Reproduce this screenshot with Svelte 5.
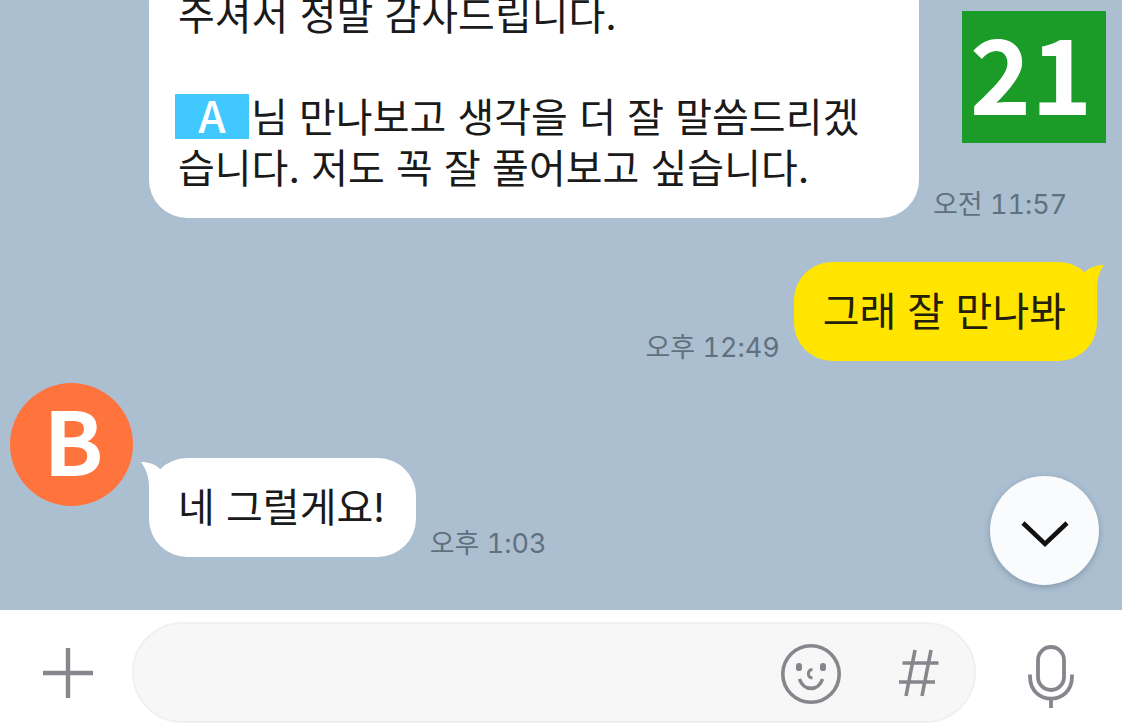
<script>
  let draft = $state('');
</script>

<main class="screen">
  <section class="chat" aria-label="대화">
    <div class="row received continued">
      <p class="bubble long">주셔서 정말 감사드립니다.<br /><br /><span class="name-tag">A</span>님 만나보고 생각을 더 잘 말씀드리겠습니다. 저도 꼭 잘 풀어보고 싶습니다.</p>
      <time datetime="11:57">오전 11:57</time>
    </div>

    <div class="row sent">
      <time datetime="12:49">오후 12:49</time>
      <p class="bubble yellow">
        그래 잘 만나봐
        <svg class="tail tail-right" viewBox="0 0 40 48" aria-hidden="true">
          <path d="M21 10C26 5 33 3 40 3C35 10 33 17 33 27V48H10Z" />
        </svg>
      </p>
    </div>

    <div class="row received first">
      <div class="avatar">B</div>
      <p class="bubble">
        네 그럴게요!
        <svg class="tail tail-left" viewBox="0 0 40 48" aria-hidden="true">
          <path d="M19 11C14 6 8 4 0 4C5 11 8 19 8 28V48H30Z" />
        </svg>
      </p>
      <time datetime="13:03">오후 1:03</time>
    </div>

    <div class="counter">21</div>

    <button class="scroll-down" type="button" aria-label="아래로">
      <svg width="48" height="28" viewBox="0 0 48 28" aria-hidden="true">
        <path d="M2 3L24 24L46 3" fill="none" stroke="#111" stroke-width="4.5" />
      </svg>
    </button>
  </section>

  <form class="composer" onsubmit={(e) => e.preventDefault()}>
    <button class="side add" type="button" aria-label="추가">
      <svg width="52" height="52" viewBox="0 0 52 52" aria-hidden="true">
        <path d="M26 1V51M1 26H51" stroke-width="4.4" />
      </svg>
    </button>
    <div class="field">
      <input type="text" aria-label="메시지" bind:value={draft} />
      <button type="button" aria-label="이모티콘">
        <svg width="60" height="60" viewBox="0 0 60 60" aria-hidden="true">
          <circle cx="30" cy="30" r="28.2" stroke-width="3.6" />
          <g fill="#85878d" stroke="none">
            <rect x="15" y="19" width="6" height="8" rx="2.8" />
            <rect x="39" y="19" width="6" height="8" rx="2.8" />
          </g>
          <path d="M31.5 25.5C26 26 26 33.5 31.5 34" stroke-width="3" />
          <path d="M18.5 35C22.500 47.500 37.500 47.500 41.5 35" stroke-width="3.6" />
        </svg>
      </button>
      <button type="button" aria-label="샵 검색">
        <svg width="60" height="60" viewBox="0 0 60 60" aria-hidden="true">
          <path d="M26 6L17 52M42 6L33 52M13.5 19H49.5M10 38H46" stroke-width="3.6" />
        </svg>
      </button>
    </div>
    <button class="side mic" type="button" aria-label="음성">
      <svg width="50" height="66" viewBox="0 0 50 66" aria-hidden="true">
        <rect x="12" y="4" width="26" height="43" rx="13" stroke-width="3.8" />
        <path d="M4 31.5V33.5C4 63 46 63 46 33.5V31.5M25 55.5V65" stroke-width="3.8" />
      </svg>
    </button>
  </form>
</main>

<style>
  :global(body) {
    margin: 0;
  }

  .screen {
    display: flex;
    flex-direction: column;
    height: 100vh;
    overflow: hidden;
    background: #fff;
    font-family: Inter, 'Noto Sans CJK KR', sans-serif;
  }

  .chat {
    position: relative;
    flex: 1;
    min-height: 0;
    display: flex;
    flex-direction: column;
    justify-content: flex-end;
    padding: 0 25px 53px 10px;
    overflow: hidden;
    background: #abbfd1;
  }

  .row {
    display: flex;
    flex-shrink: 0;
    align-items: flex-end;
    gap: 14px;
  }

  .continued {
    padding-left: 139px;
  }

  .sent {
    justify-content: flex-end;
    margin-top: 44px;
  }

  .first {
    margin-top: 22px;
  }

  .bubble {
    position: relative;
    isolation: isolate;
    margin: 0;
    padding: 24px 31px 24px 29px;
    border-radius: 38px;
    background: #fff;
    color: #1a1a1a;
    font-size: 40px;
    line-height: 51px;
  }

  .long {
    flex: 0 1 710px;
  }

  .yellow {
    background: #ffe500;
    color: #241f0a;
  }

  .name-tag {
    display: inline-block;
    width: 74px;
    height: 45px;
    margin: 0 2px 4px -3px;
    background: #40c8ff;
    color: #fff;
    font-family: 'Noto Sans CJK KR', sans-serif;
    font-size: 44px;
    font-weight: 500;
    line-height: 41px;
    text-align: center;
    vertical-align: bottom;
  }

  .tail {
    position: absolute;
    z-index: -1;
    top: 0;
    width: 40px;
    height: 48px;
  }

  .tail-right {
    right: -7px;
    fill: #ffe500;
  }

  .tail-left {
    left: -8px;
    fill: #fff;
  }

  time {
    flex-shrink: 0;
    color: #61707e;
    font-size: 27px;
    font-variant-numeric: tabular-nums;
    line-height: 26px;
  }

  .avatar {
    flex-shrink: 0;
    align-self: flex-start;
    box-sizing: border-box;
    width: 123px;
    height: 123px;
    margin-right: 2px;
    padding-left: 4px;
    border-radius: 50%;
    background: #ff733c;
    color: #fff;
    font-family: 'Noto Sans CJK KR', sans-serif;
    font-size: 88px;
    font-weight: 700;
    line-height: 110px;
    text-align: center;
  }

  .first .bubble {
    margin-top: 75px;
  }

  .counter {
    position: absolute;
    top: 11px;
    right: 16px;
    box-sizing: border-box;
    width: 144px;
    height: 132px;
    padding-right: 6px;
    background: #1b9b28;
    color: #fff;
    font-family: 'Noto Sans CJK KR', sans-serif;
    font-size: 104px;
    font-weight: 700;
    line-height: 118px;
    text-align: center;
  }

  button {
    display: flex;
    align-items: center;
    justify-content: center;
    flex-shrink: 0;
    padding: 0;
    border: 0;
    background: none;
    cursor: pointer;
  }

  .scroll-down {
    position: absolute;
    right: 23px;
    bottom: 25px;
    width: 109px;
    height: 109px;
    padding-top: 6px;
    border-radius: 50%;
    background: #f9fbfd;
    box-shadow: 0 2px 6px rgba(60, 80, 100, 0.35);
  }

  .composer {
    display: flex;
    flex-shrink: 0;
    padding-top: 12px;
    background: #fff;
  }

  .composer svg {
    fill: none;
    stroke: #85878d;
  }

  .side {
    height: 101px;
  }

  .add {
    width: 132px;
    padding-left: 4px;
  }

  .mic {
    width: 146px;
    padding: 6px 0 0 4px;
  }

  .field {
    display: flex;
    flex: 1;
    align-items: center;
    gap: 48px;
    box-sizing: border-box;
    min-width: 0;
    height: 101px;
    padding: 2px 25px 0 40px;
    border: 2px solid #f0f0f0;
    border-radius: 51px;
    background: #f7f7f7;
  }

  input {
    flex: 1;
    min-width: 0;
    border: 0;
    outline: 0;
    background: none;
    color: #1a1a1a;
    font: inherit;
    font-size: 40px;
  }
</style>
